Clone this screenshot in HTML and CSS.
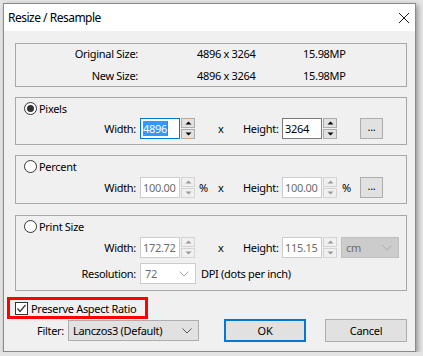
FILE: index.html
```html
<!DOCTYPE html>
<html>
<head>
    <meta charset="utf-8" />
    <title>Resize / Resample</title>
    <link rel="stylesheet" href="styles.css">
</head>
<body>

<div class="dialog">
    <div class="titlebar">
        <span class="title">Resize / Resample</span>
        <svg class="close" width="12" height="12" viewBox="0 0 12 12">
            <path d="M1 1 L11 11 M11 1 L1 11" stroke="#1a1a1a" stroke-width="1" fill="none" />
        </svg>
    </div>

    <div class="content">
        <div class="group group-info">
            <div class="info-row">
                <span class="info-label">Original Size:</span>
                <span class="info-value">4896 x 3264</span>
                <span class="info-mp">15.98MP</span>
            </div>
            <div class="info-row">
                <span class="info-label">New Size:</span>
                <span class="info-value">4896 x 3264</span>
                <span class="info-mp">15.98MP</span>
            </div>
        </div>

        <div class="group group-pixels">
            <div class="radio-row">
                <span class="radio checked"></span>
                <span>Pixels</span>
            </div>
            <div class="field-row">
                <span class="field-label">Width:</span>
                <span class="input focused"><span class="selected">4896</span><span class="caret"></span></span>
                <span class="spin">
                    <span class="spin-btn"><svg width="7" height="4" viewBox="0 0 7 4"><path d="M0.5 3.5 L3.5 0.5 L6.5 3.5 Z" fill="#000" /></svg></span>
                    <span class="spin-btn"><svg width="7" height="4" viewBox="0 0 7 4"><path d="M0.5 0.5 L3.5 3.5 L6.5 0.5 Z" fill="#000" /></svg></span>
                </span>
                <span class="unit"></span>
                <span class="times">x</span>
                <span class="height-label">Height:</span>
                <span class="input">3264</span>
                <span class="spin">
                    <span class="spin-btn"><svg width="7" height="4" viewBox="0 0 7 4"><path d="M0.5 3.5 L3.5 0.5 L6.5 3.5 Z" fill="#000" /></svg></span>
                    <span class="spin-btn"><svg width="7" height="4" viewBox="0 0 7 4"><path d="M0.5 0.5 L3.5 3.5 L6.5 0.5 Z" fill="#000" /></svg></span>
                </span>
                <span class="unit unit-right"></span>
                <span class="dots-btn">...</span>
            </div>
        </div>

        <div class="group group-percent">
            <div class="radio-row">
                <span class="radio"></span>
                <span>Percent</span>
            </div>
            <div class="field-row">
                <span class="field-label">Width:</span>
                <span class="input disabled">100.00</span>
                <span class="spin disabled">
                    <span class="spin-btn"><svg width="7" height="4" viewBox="0 0 7 4"><path d="M0.5 3.5 L3.5 0.5 L6.5 3.5 Z" fill="#9a9a9a" /></svg></span>
                    <span class="spin-btn"><svg width="7" height="4" viewBox="0 0 7 4"><path d="M0.5 0.5 L3.5 3.5 L6.5 0.5 Z" fill="#9a9a9a" /></svg></span>
                </span>
                <span class="unit">%</span>
                <span class="times">x</span>
                <span class="height-label">Height:</span>
                <span class="input disabled">100.00</span>
                <span class="spin disabled">
                    <span class="spin-btn"><svg width="7" height="4" viewBox="0 0 7 4"><path d="M0.5 3.5 L3.5 0.5 L6.5 3.5 Z" fill="#9a9a9a" /></svg></span>
                    <span class="spin-btn"><svg width="7" height="4" viewBox="0 0 7 4"><path d="M0.5 0.5 L3.5 3.5 L6.5 0.5 Z" fill="#9a9a9a" /></svg></span>
                </span>
                <span class="unit unit-right">%</span>
                <span class="dots-btn">...</span>
            </div>
        </div>

        <div class="group group-print">
            <div class="radio-row">
                <span class="radio"></span>
                <span>Print Size</span>
            </div>
            <div class="field-row">
                <span class="field-label">Width:</span>
                <span class="input disabled">172.72</span>
                <span class="spin disabled">
                    <span class="spin-btn"><svg width="7" height="4" viewBox="0 0 7 4"><path d="M0.5 3.5 L3.5 0.5 L6.5 3.5 Z" fill="#9a9a9a" /></svg></span>
                    <span class="spin-btn"><svg width="7" height="4" viewBox="0 0 7 4"><path d="M0.5 0.5 L3.5 3.5 L6.5 0.5 Z" fill="#9a9a9a" /></svg></span>
                </span>
                <span class="unit"></span>
                <span class="times">x</span>
                <span class="height-label">Height:</span>
                <span class="input disabled">115.15</span>
                <span class="spin disabled">
                    <span class="spin-btn"><svg width="7" height="4" viewBox="0 0 7 4"><path d="M0.5 3.5 L3.5 0.5 L6.5 3.5 Z" fill="#9a9a9a" /></svg></span>
                    <span class="spin-btn"><svg width="7" height="4" viewBox="0 0 7 4"><path d="M0.5 0.5 L3.5 3.5 L6.5 0.5 Z" fill="#9a9a9a" /></svg></span>
                </span>
                <span class="combo combo-unit">
                    <span>cm</span>
                    <svg width="10" height="6" viewBox="0 0 10 6"><path d="M0.5 0.5 L5 5 L9.5 0.5" stroke="#a8a8a8" fill="none" /></svg>
                </span>
            </div>
            <div class="field-row resolution-row">
                <span class="field-label">Resolution:</span>
                <span class="combo combo-res">
                    <span>72</span>
                    <svg width="10" height="6" viewBox="0 0 10 6"><path d="M0.5 0.5 L5 5 L9.5 0.5" stroke="#b0b0b0" fill="none" /></svg>
                </span>
                <span class="res-note">DPI (dots per inch)</span>
            </div>
        </div>

        <div class="aspect">
            <span class="checkbox">
                <svg width="11" height="11" viewBox="0 0 11 11"><path d="M1.5 5.5 L4 8.5 L9.5 2" stroke="#333" stroke-width="1.2" fill="none" /></svg>
            </span>
            <span>Preserve Aspect Ratio</span>
        </div>

        <div class="bottom-row">
            <span class="filter-label">Filter:</span>
            <span class="combo combo-filter">
                <span>Lanczos3 (Default)</span>
                <svg width="10" height="6" viewBox="0 0 10 6"><path d="M0.5 0.5 L5 5 L9.5 0.5" stroke="#555" fill="none" /></svg>
            </span>
            <span class="button default">OK</span>
            <span class="button">Cancel</span>
        </div>
    </div>
</div>

</body>
</html>
```

FILE: styles.css
```css
body {
    margin: 0;
    padding: 3px 0 0 3px;
    background-color: #e4e4e4;
    font-family: "Noto Sans", "Open Sans", sans-serif;
    font-size: 11px;
    letter-spacing: -0.3px;
    color: #000000;
    white-space: nowrap;
}

.dialog {
    width: 411px;
    height: 347px;
    border: 1px solid #8a8a8a;
    background-color: #f0f0f0;
    box-shadow: 2px 2px 5px rgba(0, 0, 0, 0.35);
    display: flex;
    flex-direction: column;
}

.titlebar {
    height: 27px;
    background-color: #ffffff;
    display: flex;
    align-items: center;
    justify-content: space-between;
    padding: 0 5px 0 4px;
}

.title {
    font-size: 12px;
    letter-spacing: -0.5px;
}

.close {
    display: block;
}

.content {
    flex: 1;
    display: flex;
    flex-direction: column;
    padding: 12px 0 0 11px;
}

.group {
    width: 392px;
    border: 1px solid #a8a8a8;
    box-sizing: border-box;
}

.group-info {
    height: 44px;
    padding-top: 0;
}

.group-pixels {
    height: 48px;
    margin-top: 10px;
}

.group-percent {
    height: 49px;
    margin-top: 10px;
}

.group-print {
    height: 76px;
    margin-top: 11px;
}

.info-row {
    display: flex;
    height: 19px;
    align-items: center;
}

.info-row + .info-row {
    margin-top: 3px;
}

.info-label {
    width: 122px;
    text-align: right;
}

.info-value {
    margin-left: 59px;
    width: 106px;
}

.radio-row {
    height: 20px;
    display: flex;
    align-items: center;
    padding-left: 8px;
}

.radio {
    width: 11px;
    height: 11px;
    border: 1px solid #333333;
    border-radius: 50%;
    background-color: #ffffff;
    margin-right: 2px;
    position: relative;
}

.radio.checked::after {
    content: "";
    position: absolute;
    left: 2px;
    top: 2px;
    width: 7px;
    height: 7px;
    border-radius: 50%;
    background-color: #333333;
}

.field-row {
    display: flex;
    align-items: center;
    height: 21px;
}

.group-percent .field-row,
.group-print .field-row {
    margin-top: 1px;
}

.group-print .resolution-row {
    margin-top: 5px;
}

.field-label {
    width: 120px;
    padding-right: 4px;
    text-align: right;
}

.input {
    width: 40px;
    height: 21px;
    box-sizing: border-box;
    border: 1px solid #7a7a7a;
    background-color: #ffffff;
    padding-left: 2px;
    display: flex;
    align-items: center;
}

.input.focused {
    border-color: #0078d7;
}

.input.disabled {
    border-color: #cccccc;
    color: #6d6d6d;
}

.selected {
    background-color: #3399ff;
    color: #ffffff;
    line-height: 15px;
}

.caret {
    width: 1px;
    height: 15px;
    background-color: #c86400;
}

.spin {
    width: 14px;
    height: 21px;
    margin-left: 1px;
    display: flex;
    flex-direction: column;
    justify-content: space-between;
}

.spin-btn {
    height: 10px;
    box-sizing: border-box;
    border: 1px solid #adadad;
    background-color: #e1e1e1;
    display: flex;
    align-items: center;
    justify-content: center;
}

.spin.disabled .spin-btn {
    border-color: #d4d4d4;
    background-color: #f0f0f0;
}

.spin-btn svg {
    display: block;
}

.unit {
    width: 23px;
    padding-left: 4px;
    box-sizing: border-box;
}

.times {
    width: 25px;
}

.height-label {
    width: 39px;
}

.unit-right {
    width: 23px;
    padding-left: 5px;
}

.dots-btn {
    width: 23px;
    height: 21px;
    box-sizing: border-box;
    border: 1px solid #adadad;
    background-color: #e1e1e1;
    text-align: center;
    line-height: 15px;
}

.combo {
    height: 21px;
    box-sizing: border-box;
    display: flex;
    align-items: center;
    justify-content: space-between;
    padding: 0 6px 0 4px;
}

.combo svg {
    display: block;
}

.combo-unit {
    width: 58px;
    margin-left: 4px;
    background-color: #cccccc;
    border: 1px solid #bfbfbf;
    color: #6d6d6d;
}

.combo-res {
    width: 56px;
    background-color: #ffffff;
    border: 1px solid #cccccc;
    color: #6d6d6d;
}

.res-note {
    margin-left: 5px;
}

.aspect {
    width: 141px;
    height: 22px;
    box-sizing: border-box;
    border: 3px solid #ff0000;
    margin: 6px 0 0 -8px;
    display: flex;
    align-items: center;
    padding-left: 5px;
}

.checkbox {
    width: 13px;
    height: 13px;
    box-sizing: border-box;
    border: 1px solid #333333;
    background-color: #ffffff;
    margin-right: 3px;
    display: flex;
    align-items: center;
    justify-content: center;
}

.checkbox svg {
    display: block;
}

.bottom-row {
    display: flex;
    align-items: center;
    height: 23px;
    margin-top: 0;
}

.filter-label {
    margin-left: 22px;
    width: 31px;
}

.combo-filter {
    width: 131px;
    background-color: #e1e1e1;
    border: 1px solid #adadad;
    padding-left: 4px;
}

.button {
    width: 82px;
    height: 23px;
    box-sizing: border-box;
    border: 1px solid #adadad;
    background-color: #e1e1e1;
    display: flex;
    align-items: center;
    justify-content: center;
    margin-left: 19px;
}

.button.default {
    border: 2px solid #0078d7;
    margin-left: 25px;
}
```
